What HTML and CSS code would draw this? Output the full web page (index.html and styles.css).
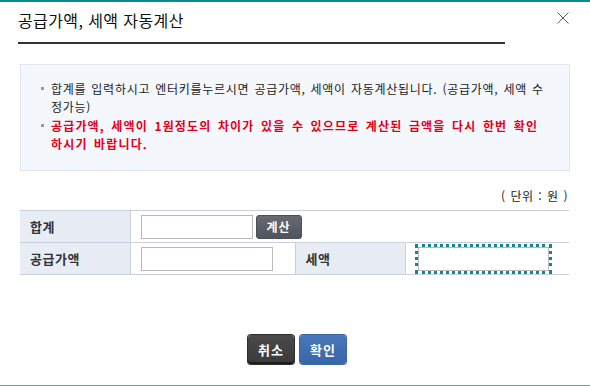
FILE: index.html
```html
<!DOCTYPE html>
<html lang="ko">
<head>
<meta charset="utf-8">
<title>공급가액, 세액 자동계산</title>
<link rel="stylesheet" href="styles.css">
</head>
<body>
<div class="frame">
  <div class="header">
    <h1 class="title">공급가액, 세액 자동계산</h1>
    <button class="close" type="button" aria-label="닫기">
      <svg width="12" height="12" viewBox="0 0 12 12"><path d="M0.5 0.5 L11.5 11.5 M11.5 0.5 L0.5 11.5" stroke="#5a6072" stroke-width="1" fill="none"/></svg>
    </button>
  </div>

  <div class="info">
    <ul class="notes">
      <li>합계를 입력하시고 엔터키를누르시면 공급가액, 세액이 자동계산됩니다. (공급가액, 세액 수정가능)</li>
      <li class="warn">공급가액, 세액이 1원정도의 차이가 있을 수 있으므로 계산된 금액을 다시 한번 확인하시기 바랍니다.</li>
    </ul>
  </div>

  <div class="unit">( 단위 : 원 )</div>

  <table class="calc">
    <colgroup>
      <col class="c-th"><col class="c-td"><col class="c-th"><col class="c-td2">
    </colgroup>
    <tr>
      <th>합계</th>
      <td colspan="3"><input class="inp inp-sum" type="text"><button class="btn-calc" type="button">계산</button></td>
    </tr>
    <tr>
      <th>공급가액</th>
      <td><input class="inp inp-supply" type="text"></td>
      <th>세액</th>
      <td><input class="inp inp-tax focused" type="text"></td>
    </tr>
  </table>

  <div class="actions">
    <button class="btn btn-cancel" type="button">취소</button>
    <button class="btn btn-ok" type="button">확인</button>
  </div>
</div>
</body>
</html>
```
FILE: styles.css
```css
* { box-sizing: border-box; }
html, body { margin: 0; padding: 0; background: #fff; }
body {
  width: 590px;
  height: 386px;
  overflow: hidden;
  font-family: "Noto Sans CJK KR", "Noto Sans", sans-serif;
  font-size: 12px;
  color: #222;
}
.frame {
  height: 386px;
  border-top: 2px solid #0b8790;
  border-bottom: 1px solid #7e96be;
  display: flex;
  flex-direction: column;
  position: relative;
}
.header {
  display: flex;
  align-items: flex-start;
  padding-left: 18px;
}
.title {
  width: 487px;
  margin: 0;
  height: 42px;
  padding-top: 1px;
  line-height: 34px;
  font-size: 16px;
  font-weight: normal;
  color: #111;
  border-bottom: 2px solid #333;
  letter-spacing: 0.4px;
}
.close {
  margin: 10px 0 0 52px;
  padding: 0;
  width: 12px;
  height: 12px;
  border: 0;
  background: none;
  display: block;
}
.close svg { display: block; }

.info {
  margin: 20px 20px 0 20px;
  width: 550px;
  height: 107px;
  background: #f4f7fc;
  border: 1px solid #dfe6f0;
  padding: 15px 21px 0 30px;
}
.notes {
  list-style: none;
  margin: 0;
  padding: 0;
}
.notes li {
  line-height: 18px;
  margin-bottom: 1px;
  color: #222;
  letter-spacing: 0.72px;
  word-spacing: 1px;
}
.notes li::before {
  content: "";
  display: inline-block;
  width: 3px;
  height: 3px;
  background: #9a9a9a;
  margin-left: -10px;
  margin-right: 7px;
  vertical-align: 4px;
}
.notes li.warn {
  color: #e2001b;
  font-weight: bold;
  letter-spacing: 1.15px;
  word-spacing: 2px;
}

.unit {
  margin: 16px 22px 0 0;
  text-align: right;
  line-height: 18px;
  color: #222;
  letter-spacing: 0.5px;
  word-spacing: 1px;
}

.calc {
  margin: 5px 0 0 20px;
  width: 549px;
  border-collapse: collapse;
  table-layout: fixed;
  border-top: 1px solid #c7d0dc;
}
.c-th { width: 110px; }
.c-td { width: 165px; }
.c-td2 { width: 164px; }
.calc th, .calc td {
  height: 32px;
  border-bottom: 1px solid #c7d0dc;
  padding: 0;
  vertical-align: middle;
}
.calc th {
  background: #e8edf5;
  text-align: left;
  padding-left: 10px;
  font-size: 13px;
  font-weight: bold;
  color: #333;
  letter-spacing: 0.5px;
  border-right: 1px solid #c7d0dc;
}
.calc td {
  padding-left: 10px;
  border-right: 1px solid #c7d0dc;
}
.calc td:last-child { border-right: 0; }
.calc tr:first-child td { font-size: 0; }

.inp {
  height: 24px;
  border: 1px solid #b9b9b9;
  background: #fff;
  padding: 0 4px;
  font: 12px "Noto Sans CJK KR", sans-serif;
  vertical-align: middle;
  outline: none;
}
.inp-sum { width: 112px; }
.inp-supply { width: 132px; }
.inp-tax {
  width: 131px;
  margin-left: 2px;
}
.inp.focused {
  outline: 3px dotted #12878f;
  outline-offset: 0;
}
.btn-calc {
  margin-left: 3px;
  width: 46px;
  height: 24px;
  border: 1px solid #4b4f57;
  border-radius: 3px;
  background: linear-gradient(#666a73, #50545c);
  color: #fff;
  font: bold 12px "Noto Sans CJK KR", sans-serif;
  padding: 0;
  vertical-align: middle;
  letter-spacing: 1px;
}

.actions {
  display: flex;
  justify-content: center;
  gap: 6px;
  margin-top: 60px;
  padding-left: 4px;
}
.btn {
  width: 46px;
  height: 29px;
  border: 0;
  border-radius: 3px;
  color: #fff;
  font: bold 13px "Noto Sans CJK KR", sans-serif;
  padding: 0;
  letter-spacing: 1px;
}
.btn-cancel {
  background: linear-gradient(#4a4a4a, #3a3a3a);
  box-shadow: inset 0 -2px 0 #1f1f1f, 0 0 0 1px #2e2e2e;
}
.btn-ok {
  background: linear-gradient(#4777ba, #3966a8);
  box-shadow: 0 0 0 1px #3a67a6;
}
```
